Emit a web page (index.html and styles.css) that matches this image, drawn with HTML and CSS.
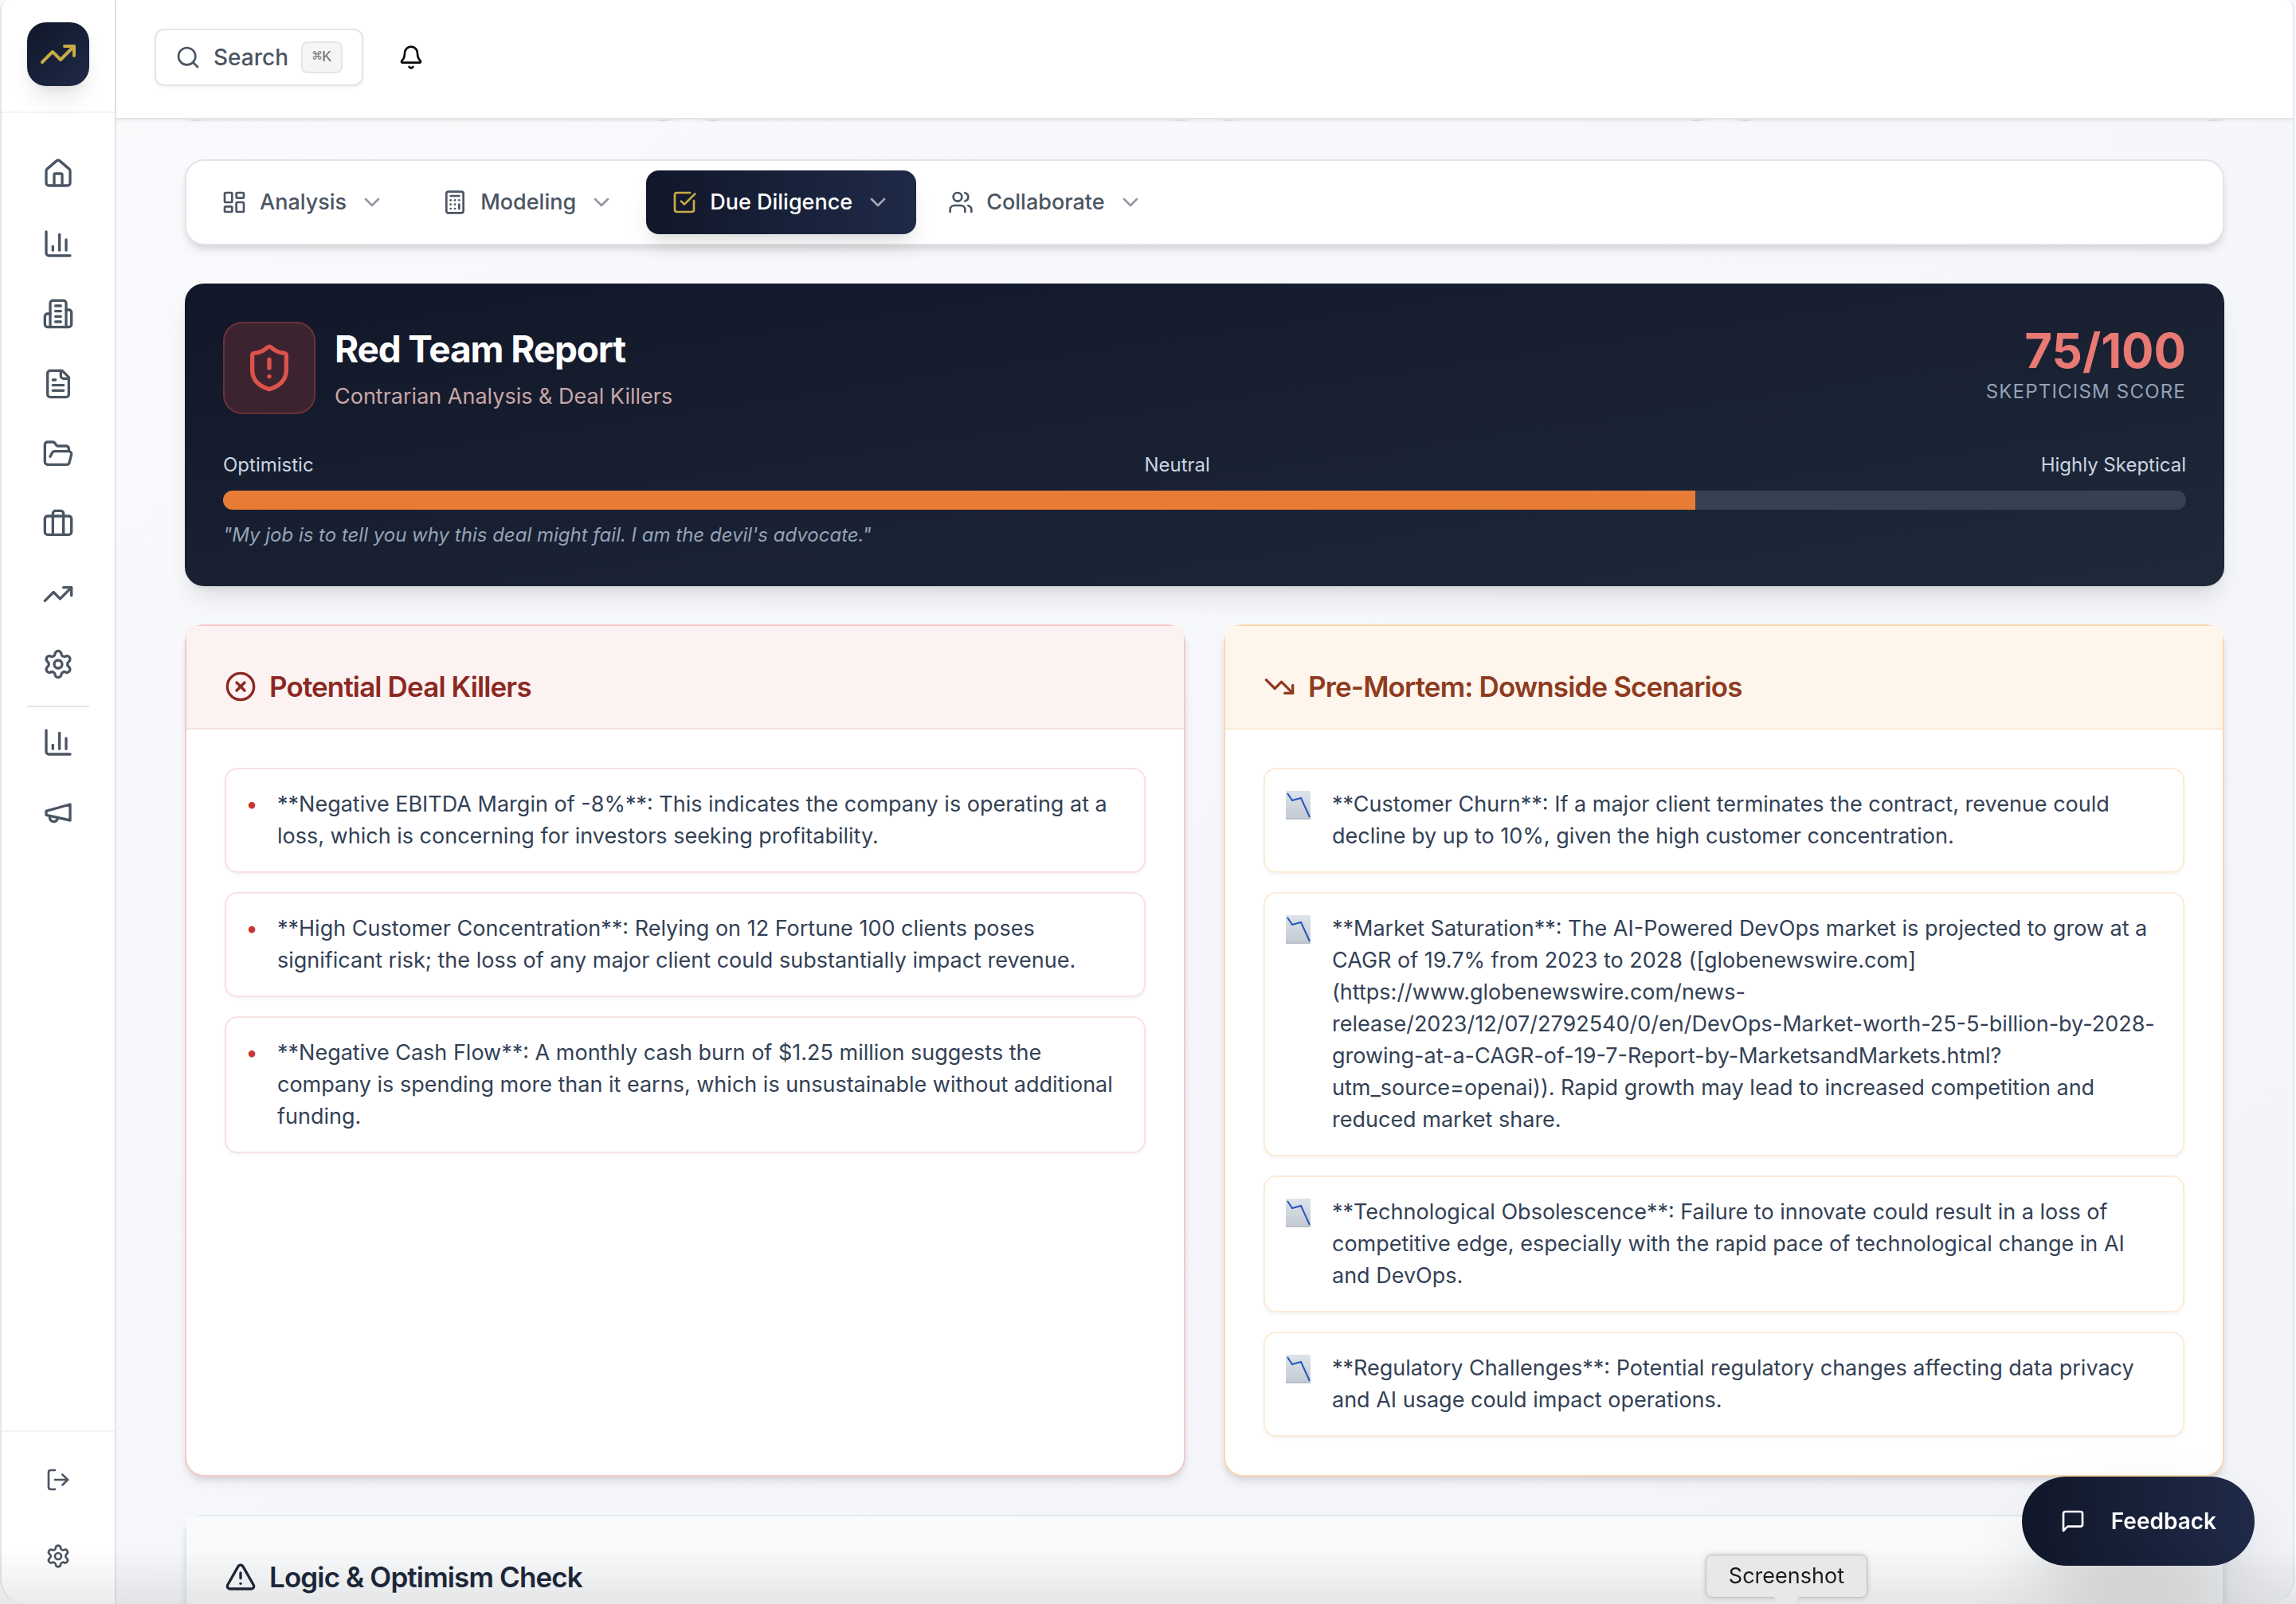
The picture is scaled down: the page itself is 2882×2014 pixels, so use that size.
FILE: index.html
```html
<!DOCTYPE html>
<html lang="en">
<head>
<meta charset="utf-8">
<meta name="viewport" content="width=device-width, initial-scale=1">
<title>Red Team Report</title>
<link rel="stylesheet" href="styles.css">
</head>
<body>
<svg class="sprite" aria-hidden="true">
  <symbol id="trending-up" viewBox="0 0 24 24"><path d="M16 7h6v6"/><path d="m22 7-8.5 8.5-5-5L2 17"/></symbol>
  <symbol id="trending-down" viewBox="0 0 24 24"><path d="M16 17h6v-6"/><path d="m22 17-8.5-8.5-5 5L2 7"/></symbol>
  <symbol id="home" viewBox="0 0 24 24"><path d="M15 21v-8a1 1 0 0 0-1-1h-4a1 1 0 0 0-1 1v8"/><path d="M3 10a2 2 0 0 1 .709-1.528l7-5.999a2 2 0 0 1 2.582 0l7 5.999A2 2 0 0 1 21 10v9a2 2 0 0 1-2 2H5a2 2 0 0 1-2-2z"/></symbol>
  <symbol id="chart" viewBox="0 0 24 24"><path d="M3 3v16a2 2 0 0 0 2 2h16"/><path d="M18 17V9"/><path d="M13 17V5"/><path d="M8 17v-3"/></symbol>
  <symbol id="building" viewBox="0 0 24 24"><path d="M6 22V4a2 2 0 0 1 2-2h8a2 2 0 0 1 2 2v18Z"/><path d="M6 12H4a2 2 0 0 0-2 2v6a2 2 0 0 0 2 2h2"/><path d="M18 9h2a2 2 0 0 1 2 2v9a2 2 0 0 1-2 2h-2"/><path d="M10 6h4"/><path d="M10 10h4"/><path d="M10 14h4"/><path d="M10 18h4"/></symbol>
  <symbol id="file" viewBox="0 0 24 24"><path d="M15 2H6a2 2 0 0 0-2 2v16a2 2 0 0 0 2 2h12a2 2 0 0 0 2-2V7Z"/><path d="M14 2v4a2 2 0 0 0 2 2h4"/><path d="M10 9H8"/><path d="M16 13H8"/><path d="M16 17H8"/></symbol>
  <symbol id="folder" viewBox="0 0 24 24"><path d="m6 14 1.5-2.9A2 2 0 0 1 9.24 10H20a2 2 0 0 1 1.94 2.5l-1.54 6a2 2 0 0 1-1.95 1.5H4a2 2 0 0 1-2-2V5a2 2 0 0 1 2-2h3.9a2 2 0 0 1 1.69.9l.81 1.2a2 2 0 0 0 1.67.9H18a2 2 0 0 1 2 2v2"/></symbol>
  <symbol id="briefcase" viewBox="0 0 24 24"><path d="M16 20V4a2 2 0 0 0-2-2h-4a2 2 0 0 0-2 2v16"/><rect width="20" height="14" x="2" y="6" rx="2"/></symbol>
  <symbol id="settings" viewBox="0 0 24 24"><path d="M9.671 4.136a2.34 2.34 0 0 1 4.659 0 2.34 2.34 0 0 0 3.319 1.915 2.34 2.34 0 0 1 2.33 4.033 2.34 2.34 0 0 0 0 3.831 2.34 2.34 0 0 1-2.33 4.033 2.34 2.34 0 0 0-3.319 1.915 2.34 2.34 0 0 1-4.659 0 2.34 2.34 0 0 0-3.32-1.915 2.34 2.34 0 0 1-2.33-4.033 2.34 2.34 0 0 0 0-3.831A2.34 2.34 0 0 1 6.35 6.051a2.34 2.34 0 0 0 3.319-1.915"/><circle cx="12" cy="12" r="3"/></symbol>
  <symbol id="megaphone" viewBox="0 0 24 24"><path d="m3 11 18-5v12L3 14v-3z"/><path d="M11.6 16.8a3 3 0 1 1-5.8-1.6"/></symbol>
  <symbol id="log-out" viewBox="0 0 24 24"><path d="m16 17 5-5-5-5"/><path d="M21 12H9"/><path d="M9 21H5a2 2 0 0 1-2-2V5a2 2 0 0 1 2-2h4"/></symbol>
  <symbol id="search" viewBox="0 0 24 24"><path d="m21 21-4.34-4.34"/><circle cx="11" cy="11" r="8"/></symbol>
  <symbol id="bell" viewBox="0 0 24 24"><path d="M10.268 21a2 2 0 0 0 3.464 0"/><path d="M3.262 15.326A1 1 0 0 0 4 17h16a1 1 0 0 0 .74-1.673C19.41 13.956 18 12.499 18 8A6 6 0 0 0 6 8c0 4.499-1.411 5.956-2.738 7.326"/></symbol>
  <symbol id="dashboard" viewBox="0 0 24 24"><rect width="7" height="9" x="3" y="3" rx="1"/><rect width="7" height="5" x="14" y="3" rx="1"/><rect width="7" height="9" x="14" y="12" rx="1"/><rect width="7" height="5" x="3" y="16" rx="1"/></symbol>
  <symbol id="calculator" viewBox="0 0 24 24"><rect width="16" height="20" x="4" y="2" rx="2"/><path d="M8 6h8"/><path d="M16 14v4"/><path d="M16 10h.01"/><path d="M12 10h.01"/><path d="M8 10h.01"/><path d="M12 14h.01"/><path d="M8 14h.01"/><path d="M12 18h.01"/><path d="M8 18h.01"/></symbol>
  <symbol id="check-square" viewBox="0 0 24 24"><path d="M21 10.656V19a2 2 0 0 1-2 2H5a2 2 0 0 1-2-2V5a2 2 0 0 1 2-2h12.344"/><path d="m9 11 3 3L22 4"/></symbol>
  <symbol id="users" viewBox="0 0 24 24"><path d="M16 21v-2a4 4 0 0 0-4-4H6a4 4 0 0 0-4 4v2"/><path d="M16 3.128a4 4 0 0 1 0 7.744"/><path d="M22 21v-2a4 4 0 0 0-3-3.87"/><circle cx="9" cy="7" r="4"/></symbol>
  <symbol id="chevron" viewBox="0 0 24 24"><path d="m6 9 6 6 6-6"/></symbol>
  <symbol id="shield" viewBox="0 0 24 24"><path d="M20 13c0 5-3.5 7.5-7.66 8.95a1 1 0 0 1-.67-.01C7.5 20.5 4 18 4 13V6a1 1 0 0 1 1-1c2 0 4.5-1.2 6.24-2.72a1.17 1.17 0 0 1 1.52 0C14.51 3.81 17 5 19 5a1 1 0 0 1 1 1z"/><path d="M12 8v4"/><path d="M12 16h.01"/></symbol>
  <symbol id="circle-x" viewBox="0 0 24 24"><circle cx="12" cy="12" r="10"/><path d="m15 9-6 6"/><path d="m9 9 6 6"/></symbol>
  <symbol id="alert" viewBox="0 0 24 24"><path d="m21.73 18-8-14a2 2 0 0 0-3.48 0l-8 14A2 2 0 0 0 4 21h16a2 2 0 0 0 1.73-3"/><path d="M12 9v4"/><path d="M12 17h.01"/></symbol>
  <symbol id="message" viewBox="0 0 24 24"><path d="M21 15a2 2 0 0 1-2 2H7l-4 4V5a2 2 0 0 1 2-2h14a2 2 0 0 1 2 2z"/></symbol>
  <linearGradient id="sheet-fill" x1="0" y1="0" x2="0" y2="1"><stop offset="0" stop-color="#dde3ea"/><stop offset="1" stop-color="#c3c9d2"/></linearGradient>
  <symbol id="chart-down" viewBox="0 0 36 40"><rect x="2" y="3" width="31" height="36" fill="url(#sheet-fill)" stroke="none"/><path d="M2 38h31" stroke="#aeb4be" stroke-width="1"/><path d="M4 6l6 9 11-3 11 24" fill="none" stroke="#2456b8" stroke-width="2" stroke-linecap="butt" stroke-linejoin="miter"/></symbol>
</svg>

<div class="app">
  <aside class="sidebar">
    <div class="brand"><a class="logo" href="#" aria-label="Dashboard"><svg class="icon icon-lg"><use href="#trending-up"/></svg></a></div>
    <nav class="side-nav" aria-label="Main">
      <a href="#" aria-label="Home"><svg class="icon"><use href="#home"/></svg></a>
      <a href="#" aria-label="Analytics"><svg class="icon"><use href="#chart"/></svg></a>
      <a href="#" aria-label="Companies"><svg class="icon"><use href="#building"/></svg></a>
      <a href="#" aria-label="Documents"><svg class="icon"><use href="#file"/></svg></a>
      <a href="#" aria-label="Data room"><svg class="icon"><use href="#folder"/></svg></a>
      <a href="#" aria-label="Portfolio"><svg class="icon"><use href="#briefcase"/></svg></a>
      <a href="#" aria-label="Trends"><svg class="icon"><use href="#trending-up"/></svg></a>
      <a href="#" aria-label="Settings"><svg class="icon"><use href="#settings"/></svg></a>
      <hr class="side-rule">
      <a href="#" aria-label="Reports"><svg class="icon"><use href="#chart"/></svg></a>
      <a href="#" aria-label="Marketing"><svg class="icon"><use href="#megaphone"/></svg></a>
    </nav>
    <div class="side-foot">
      <button type="button" aria-label="Log out"><svg class="icon icon-sm"><use href="#log-out"/></svg></button>
      <button type="button" aria-label="Preferences"><svg class="icon icon-sm"><use href="#settings"/></svg></button>
    </div>
  </aside>

  <div class="page">
    <header class="topbar">
      <button class="search" type="button"><svg class="icon icon-sm"><use href="#search"/></svg><span>Search</span><kbd>⌘K</kbd></button>
      <button class="bell" type="button" aria-label="Notifications"><svg class="icon icon-sm"><use href="#bell"/></svg></button>
    </header>

    <main class="content">
      <div class="stats"><div class="stat"></div><div class="stat"></div><div class="stat"></div><div class="stat"></div></div>

      <nav class="tabs" aria-label="Deal sections">
        <button class="tab" type="button"><svg class="icon icon-sm"><use href="#dashboard"/></svg><span>Analysis</span><svg class="icon icon-sm chevron"><use href="#chevron"/></svg></button>
        <button class="tab" type="button"><svg class="icon icon-sm"><use href="#calculator"/></svg><span>Modeling</span><svg class="icon icon-sm chevron"><use href="#chevron"/></svg></button>
        <button class="tab tab-active" type="button"><svg class="icon icon-sm gold"><use href="#check-square"/></svg><span>Due Diligence</span><svg class="icon icon-sm chevron"><use href="#chevron"/></svg></button>
        <button class="tab" type="button"><svg class="icon icon-sm"><use href="#users"/></svg><span>Collaborate</span><svg class="icon icon-sm chevron"><use href="#chevron"/></svg></button>
      </nav>

      <section class="hero">
        <div class="hero-head">
          <div class="hero-badge"><svg class="icon icon-xl"><use href="#shield"/></svg></div>
          <div class="hero-title">
            <h1>Red Team Report</h1>
            <p>Contrarian Analysis &amp; Deal Killers</p>
          </div>
          <div class="score">
            <div class="score-value">75/100</div>
            <div class="score-label">SKEPTICISM SCORE</div>
          </div>
        </div>
        <div class="scale"><span>Optimistic</span><span>Neutral</span><span>Highly Skeptical</span></div>
        <div class="meter" role="progressbar" aria-label="Skepticism score" aria-valuenow="75" aria-valuemin="0" aria-valuemax="100"><div class="meter-fill" style="width: 75%"></div></div>
        <p class="quote">"My job is to tell you why this deal might fail. I am the devil's advocate."</p>
      </section>

      <div class="columns">
        <section class="card card-red">
          <h2 class="card-head"><svg class="icon"><use href="#circle-x"/></svg>Potential Deal Killers</h2>
          <ul class="items">
            <li><span class="bullet">•</span><p>**Negative EBITDA Margin of -8%**: This indicates the company is operating at a loss, which is concerning for investors seeking profitability.</p></li>
            <li><span class="bullet">•</span><p>**High Customer Concentration**: Relying on 12 Fortune 100 clients poses significant risk; the loss of any major client could substantially impact revenue.</p></li>
            <li><span class="bullet">•</span><p>**Negative Cash Flow**: A monthly cash burn of $1.25 million suggests the company is spending more than it earns, which is unsustainable without additional funding.</p></li>
          </ul>
        </section>
        <section class="card card-orange">
          <h2 class="card-head"><svg class="icon"><use href="#trending-down"/></svg>Pre-Mortem: Downside Scenarios</h2>
          <ul class="items">
            <li><svg class="sheet"><use href="#chart-down"/></svg><p>**Customer Churn**: If a major client terminates the contract, revenue could decline by up to 10%, given the high customer concentration.</p></li>
            <li><svg class="sheet"><use href="#chart-down"/></svg><p>**Market Saturation**: The AI-Powered DevOps market is projected to grow at a CAGR of 19.7% from 2023 to 2028 ([globenewswire.com](https://www.globenewswire.com/news-release/2023/12/07/2792540/0/en/DevOps-Market-worth-25-5-billion-by-2028-growing-at-a-CAGR-of-19-7-Report-by-MarketsandMarkets.html?utm_source=openai)). Rapid growth may lead to increased competition and reduced market share.</p></li>
            <li><svg class="sheet"><use href="#chart-down"/></svg><p>**Technological Obsolescence**: Failure to innovate could result in a loss of competitive edge, especially with the rapid pace of technological change in AI and DevOps.</p></li>
            <li><svg class="sheet"><use href="#chart-down"/></svg><p>**Regulatory Challenges**: Potential regulatory changes affecting data privacy and AI usage could impact operations.</p></li>
          </ul>
        </section>
      </div>

      <section class="card card-slate">
        <h2 class="card-head"><svg class="icon"><use href="#alert"/></svg>Logic &amp; Optimism Check</h2>
      </section>
    </main>
  </div>
</div>

<button class="feedback" type="button"><svg class="icon icon-sm"><use href="#message"/></svg>Feedback</button>
<div class="shade"></div>
<div class="tooltip" role="tooltip">Screenshot</div>
</body>
</html>
```

FILE: styles.css
```css
* { box-sizing: border-box; margin: 0; padding: 0; }

body {
  background: #f8fafc;
  color: #334155;
  font-family: Inter, "Liberation Sans", sans-serif;
  font-size: 27px;
  line-height: 40px;
}

button { background: none; border: 0; color: inherit; font: inherit; }
a { color: inherit; }
ul { list-style: none; }

.sprite { position: absolute; width: 0; height: 0; }

.icon {
  flex: none;
  width: 40px;
  height: 40px;
  fill: none;
  stroke: currentColor;
  stroke-width: 2;
  stroke-linecap: round;
  stroke-linejoin: round;
}
.icon-sm { width: 32px; height: 32px; }
.icon-lg { width: 48px; height: 48px; }
.icon-xl { width: 64px; height: 64px; }
.gold { color: #c9ab45; }

.app {
  display: flex;
  height: 100vh;
  margin-right: 2px;
  overflow: hidden;
  border: solid #e2e6f0;
  border-width: 0 2px;
  border-radius: 12px 12px 32px 32px;
  background: #fff;
}

/* Sidebar */
.sidebar {
  display: flex;
  flex: none;
  flex-direction: column;
  width: 144px;
  border-right: 2px solid #e2e4ea;
  background: #fff;
  color: #4b5563;
}
.brand { padding: 28px 32px 32px; border-bottom: 2px solid #f3f4f6; }
.logo {
  display: flex;
  align-items: center;
  justify-content: center;
  height: 80px;
  border-radius: 24px;
  background: linear-gradient(135deg, #111729, #1f2a48);
  box-shadow: 0 20px 30px -6px rgba(0, 0, 0, .1), 0 8px 12px -8px rgba(0, 0, 0, .1);
  color: #c9ab45;
}
.side-nav { flex: 1; padding: 32px; }
.side-nav a { display: flex; align-items: center; justify-content: center; height: 88px; }
.side-rule { height: 2px; margin-top: 8px; border: 0; background: #e5e5e5; }
.side-foot {
  display: flex;
  flex-direction: column;
  align-items: center;
  gap: 16px;
  padding: 20px 0;
  border-top: 2px solid #f3f4f6;
}
.side-foot button { display: flex; align-items: center; justify-content: center; width: 80px; height: 80px; }

/* Page */
.page {
  display: flex;
  flex: 1;
  flex-direction: column;
  min-width: 0;
  background: linear-gradient(to bottom right, #f8fafc, #f5f7fa, #f2f4f9);
}
.topbar {
  display: flex;
  flex: none;
  align-items: center;
  gap: 24px;
  height: 150px;
  padding: 0 48px 4px;
  border-bottom: 2px solid #e2e4ea;
  background: #fff;
  box-shadow: 0 2px 4px rgba(0, 0, 0, .05);
  z-index: 1;
}
.search {
  display: flex;
  align-items: center;
  gap: 16px;
  height: 72px;
  padding: 0 24px;
  border: 2px solid #e5e5e5;
  border-radius: 12px;
  box-shadow: 0 2px 4px rgba(0, 0, 0, .05);
  color: #4b5563;
  font-size: 28px;
  font-weight: 500;
}
kbd {
  height: 40px;
  padding: 0 12px;
  border: 2px solid #e5e5e5;
  border-radius: 8px;
  background: #f5f5f5;
  color: #737373;
  font: 500 20px/36px "Liberation Mono", "DejaVu Sans Mono", monospace;
}
.bell { display: flex; align-items: center; justify-content: center; width: 72px; height: 72px; color: #0a0a0a; }

.content {
  display: flex;
  flex-direction: column;
  gap: 48px;
  margin-top: -50px;
  padding: 0 86px;
}
.content > * { flex: none; }

.stats { display: grid; grid-template-columns: repeat(4, 1fr); gap: 32px; overflow: hidden; }
.stat {
  height: 52px;
  border: 2px solid #f1f2f4;
  border-radius: 24px;
  background: #fff;
  box-shadow: 0 8px 12px -2px rgba(0, 0, 0, .1), 0 4px 8px -4px rgba(0, 0, 0, .1);
}

/* Section tabs */
.tabs {
  display: flex;
  gap: 8px;
  padding: 12px;
  border: 2px solid #e2e4ea;
  border-radius: 24px;
  background: #fff;
  box-shadow: 0 8px 12px -2px rgba(0, 0, 0, .1), 0 4px 8px -4px rgba(0, 0, 0, .1);
}
.tab {
  display: flex;
  align-items: center;
  gap: 16px;
  height: 80px;
  padding: 0 32px;
  border-radius: 16px;
  color: #4b5563;
  font-weight: 500;
}
.chevron { opacity: .6; }
.tab-active {
  background: linear-gradient(90deg, #111729, #1f2a48);
  box-shadow: 0 20px 30px -6px rgba(0, 0, 0, .1), 0 8px 12px -8px rgba(0, 0, 0, .1);
  color: #fff;
}

/* Report summary */
.hero {
  padding: 48px;
  border-radius: 24px;
  background: linear-gradient(to bottom right, #111729, #1f2939);
  box-shadow: 0 20px 30px -6px rgba(0, 0, 0, .1), 0 8px 12px -8px rgba(0, 0, 0, .1);
}
.hero-head { display: flex; gap: 24px; margin-bottom: 48px; }
.hero-badge {
  padding: 24px;
  border: 2px solid #6d3138;
  border-radius: 24px;
  background: #3b2430;
  color: #dd524c;
}
.hero-badge .icon { display: block; }
.hero-title { display: flex; flex: 1; flex-direction: column; justify-content: center; gap: 8px; }
h1 {
  color: #fff;
  font-size: 46px;
  font-weight: 700;
  line-height: 64px;
  letter-spacing: -0.025em;
}
.hero-title p { color: #c9a6a8; }
.score { text-align: right; }
.score-value { color: #e87973; font-size: 60px; font-weight: 700; line-height: 72px; }
.score-label { color: #94a3b8; font-size: 24px; line-height: 32px; letter-spacing: 0.05em; }
.scale {
  display: flex;
  justify-content: space-between;
  margin-bottom: 16px;
  color: #cbd5e1;
  font-size: 24px;
  line-height: 32px;
}
.meter { height: 24px; overflow: hidden; border-radius: 12px; background: #374151; }
.meter-fill { height: 100%; background: #e87c36; }
.quote { margin-top: 16px; color: #94a3b8; font-size: 24px; font-style: italic; line-height: 32px; }

/* Cards */
.columns { display: grid; grid-template-columns: 1fr 1fr; gap: 48px; }
.card {
  border: 2px solid var(--edge);
  border-radius: 24px;
  background: #fff;
  box-shadow: 0 8px 12px -2px rgba(0, 0, 0, .1), 0 4px 8px -4px rgba(0, 0, 0, .1);
}
.card-red { --edge: #f5c9c9; --line: #fae1e1; --tint: #fdf2f2; --ink: #8c2822; }
.card-orange { --edge: #f7d8ae; --line: #fcebd6; --tint: #fef6ed; --ink: #8f3b20; }
.card-slate { --edge: #e2e8f0; --line: #e2e8f0; --tint: #f8fafc; --ink: #1e293b; }
.card-head {
  display: flex;
  align-items: center;
  gap: 16px;
  padding: 48px 48px 24px;
  border-bottom: 2px solid var(--line);
  background: var(--tint);
  color: var(--ink);
  font-size: 35px;
  font-weight: 600;
  line-height: 56px;
  letter-spacing: -0.025em;
}
.items { display: flex; flex-direction: column; gap: 24px; padding: 48px; }
.items li {
  display: flex;
  gap: 24px;
  padding: 24px;
  border: 2px solid var(--line);
  border-radius: 16px;
  box-shadow: 0 2px 4px rgba(0, 0, 0, .05);
}
.bullet { flex: none; width: 16px; color: #c8372d; text-align: center; }
.sheet { flex: none; width: 36px; height: 40px; }

/* Floating controls */
.feedback {
  position: fixed;
  right: 52px;
  bottom: 48px;
  display: flex;
  align-items: center;
  gap: 32px;
  height: 112px;
  padding: 0 48px;
  border-radius: 56px;
  background: linear-gradient(90deg, #111729, #1f2a48);
  box-shadow: 0 50px 100px -24px rgba(0, 0, 0, .25);
  color: #fff;
  font-size: 28px;
  font-weight: 600;
  z-index: 2;
}
.shade {
  position: fixed;
  inset: auto 0 0;
  height: 72px;
  background: linear-gradient(rgba(0, 0, 0, 0), rgba(0, 0, 0, .08));
  pointer-events: none;
  z-index: 3;
}
.tooltip {
  position: fixed;
  right: 538px;
  bottom: 8px;
  padding: 6px 28px;
  border: 1px solid #bfc1c2;
  border-radius: 8px;
  background: #e7e9e9;
  box-shadow: 0 0 6px rgba(0, 0, 0, .2);
  color: #1c1c1c;
  z-index: 4;
}
.tooltip::after {
  content: "";
  position: absolute;
  top: 100%;
  left: 50%;
  width: 32px;
  height: 16px;
  margin-left: -16px;
  background: #e7e9e9;
  clip-path: polygon(0 0, 100% 0, 50% 100%);
}
```
